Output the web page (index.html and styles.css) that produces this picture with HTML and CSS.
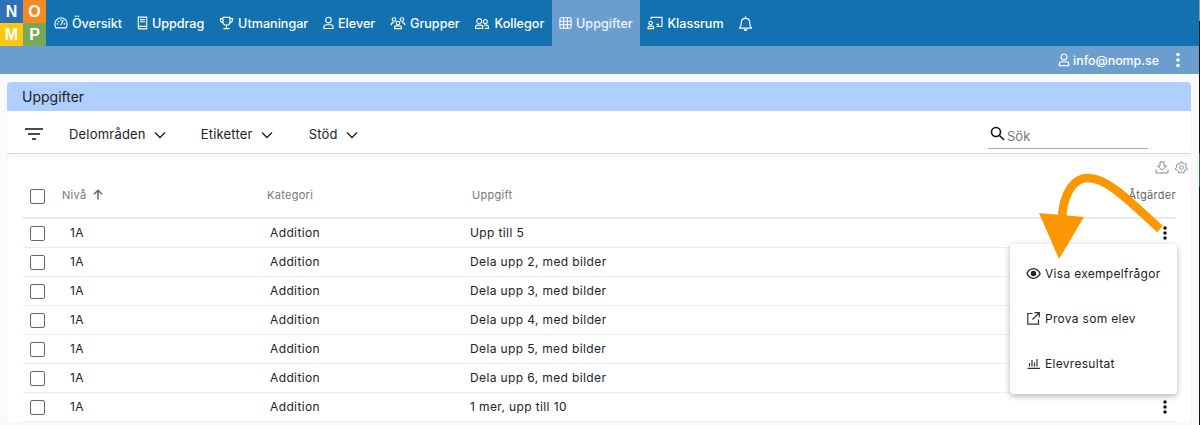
FILE: index.html
```html
<!DOCTYPE html>
<html lang="sv">
<head>
<meta charset="utf-8">
<title>Uppgifter</title>
<link rel="stylesheet" href="styles.css">
</head>
<body>
<header class="topnav">
  <div class="logo"><span class="tile n">N</span><span class="tile o">O</span><span class="tile m">M</span><span class="tile p">P</span></div>
  <nav class="menu">
    <a class="item"><svg class="ic" width="14" height="14" viewBox="0 0 16 16"><path d="M2.2 13.500h11.600c.8-1.300 1.200-2.800 1.200-4.500a7 7 0 0 0-14 0c0 1.700.4 3.200 1.200 4.500z"/><path d="M8 10l2.500-5M3.500 9h1M11.500 9h1M5 6l.7.7M8 4.200v1"/></svg>Översikt</a>
    <a class="item"><svg class="ic" width="11" height="14" viewBox="0 0 13 16"><path d="M1.500 1h10v14h-8.500a1.500 1.500 0 0 1-1.500-1.500zM1.500 12h10M4 4h5M4 6.500h5"/></svg>Uppdrag</a>
    <a class="item"><svg class="ic" width="15" height="14" viewBox="0 0 16 16"><path d="M4 1.500h8v5a4 4 0 0 1-8 0zM4 3h-3c0 3 1 4.500 3.500 5M12 3h3c0 3-1 4.500-3.500 5M8 10.500v3M5 14.500h6"/></svg>Utmaningar</a>
    <a class="item"><svg class="ic" width="11" height="14" viewBox="0 0 13 16"><circle cx="6.500" cy="4.500" r="3.300"/><path d="M1 14.500v-1.500c0-1.800 1.500-3 3-3h5c1.500 0 3 1.200 3 3v1.500z"/></svg>Elever</a>
    <a class="item"><svg class="ic" width="16" height="14" viewBox="0 0 17 16"><circle cx="4" cy="4" r="2"/><circle cx="13" cy="4" r="2"/><circle cx="8.500" cy="8" r="2"/><path d="M.8 10c0-1.500 1-2.500 2.500-2.500M16.200 10c0-1.500-1-2.500-2.500-2.500M4.500 14.500v-1c0-1.300 1-2.200 2.200-2.200h3.600c1.200 0 2.200.9 2.200 2.200v1z"/></svg>Grupper</a>
    <a class="item"><svg class="ic" width="16" height="13" viewBox="0 0 18 16"><circle cx="5.500" cy="5" r="3"/><circle cx="13" cy="5.500" r="2.500"/><path d="M1 14v-1.500c0-1.500 1-2.500 2.500-2.500h4c1.500 0 2.500 1 2.500 2.500v1.500zM12 10h2.500c1.500 0 2.500 1 2.500 2.500v1.500h-4"/></svg>Kollegor</a>
    <a class="item active"><svg class="ic" width="13" height="12" viewBox="0 0 16 15"><rect x="1" y="1" width="14" height="13" rx="1.500"/><path d="M1 5.300h14M1 9.700h14M5.700 1v13M10.300 1v13"/></svg>Uppgifter</a>
    <a class="item"><svg class="ic" width="16" height="14" viewBox="0 0 18 16"><path d="M4.500 3v-1.500h12.500v10.500h-6M13 12v-2.500h-2"/><circle cx="4" cy="8" r="2"/><path d="M1 14.500v-1c0-1.300 1-2 2-2h2c1 0 2.500.7 2.500 2v1z"/></svg>Klassrum</a>
    <a class="item bell"><svg class="ic" width="15" height="17" viewBox="0 0 16 17"><path d="M1.500 13.500c1.500-1.500 2-3 2-5.500 0-3 2-5 4.500-5s4.500 2 4.500 5c0 2.500.5 4 2 5.500z"/><path d="M8 3v-1.500"/><path class="fill" d="M6 14.500h4a2 2 0 0 1-4 0z"/></svg></a>
  </nav>
</header>

<div class="subnav">
  <span class="user"><svg class="ic" width="12" height="14" viewBox="0 0 13 16"><circle cx="6.500" cy="4.500" r="3.300"/><path d="M1 14.500v-1.500c0-1.800 1.500-3 3-3h5c1.500 0 3 1.200 3 3v1.500z"/></svg>info@nomp.se</span>
  <svg class="dots-w" width="4" height="16" viewBox="0 0 4 16"><circle cx="2" cy="2.500" r="1.800"/><circle cx="2" cy="8" r="1.800"/><circle cx="2" cy="13.500" r="1.800"/></svg>
</div>

<main class="page">
  <div class="title">Uppgifter</div>

  <section class="filters">
    <svg class="filter-ic" width="18" height="12" viewBox="0 0 18 12"><path d="M0 1h18M3 6h12M7 11h4"/></svg>
    <button class="dd dd1">Delområden<svg class="chev" width="12" height="8" viewBox="0 0 12 8"><path d="M1 1.500l5 5 5-5"/></svg></button>
    <button class="dd dd2">Etiketter<svg class="chev" width="12" height="8" viewBox="0 0 12 8"><path d="M1 1.500l5 5 5-5"/></svg></button>
    <button class="dd">Stöd<svg class="chev" width="12" height="8" viewBox="0 0 12 8"><path d="M1 1.500l5 5 5-5"/></svg></button>
    <div class="search">
      <svg class="search-ic" width="15" height="15" viewBox="0 0 15 15"><circle cx="6" cy="6" r="4.500"/><path d="M9.500 9.500l4.500 4.500"/></svg>
      <span class="search-ph">Sök</span>
    </div>
  </section>

  <section class="card">
    <div class="tools">
      <svg class="tool" width="14" height="13" viewBox="0 0 14 13"><path d="M5 1h4v4h2.500L7 9 2.500 5H5zM1 8.500v3.500h12V8.500"/></svg>
      <svg class="tool" width="13" height="13" viewBox="0 0 14 14"><circle cx="7" cy="7" r="2"/><path d="M6 1h2l.4 1.700 1.500.7 1.600-.8 1.200 1.600-1.200 1.200.2 1.600 1.500.9-.6 1.900-1.700-.2-1.100 1.200.1 1.700-1.900.5-.9-1.400H6.300l-.9 1.400-1.900-.5.1-1.700-1.100-1.200-1.700.2-.6-1.900 1.500-.9.2-1.600L1.700 4.200l1.200-1.600 1.600.8L6 2.700z"/></svg>
    </div>
    <div class="row head">
      <span class="cb"></span>
      <span class="cell first">Nivå <svg class="up" width="10" height="11" viewBox="0 0 10 11"><path d="M5 10.500V1.500M1 5.200L5 1.200l4 4"/></svg></span>
      <span class="cell">Kategori</span>
      <span class="cell">Uppgift</span>
      <span class="actions-h">Åtgärder</span>
    </div>
    <div class="row"><span class="cb"></span><span class="cell first b">1A</span><span class="cell b">Addition</span><span class="cell b t">Upp till 5</span><span class="more"><svg class="dots" width="4" height="14" viewBox="0 0 4 14"><circle cx="2" cy="2" r="1.700"/><circle cx="2" cy="7" r="1.700"/><circle cx="2" cy="12" r="1.700"/></svg></span></div>
    <div class="row"><span class="cb"></span><span class="cell first b">1A</span><span class="cell b">Addition</span><span class="cell b t">Dela upp 2, med bilder</span></div>
    <div class="row"><span class="cb"></span><span class="cell first b">1A</span><span class="cell b">Addition</span><span class="cell b t">Dela upp 3, med bilder</span></div>
    <div class="row"><span class="cb"></span><span class="cell first b">1A</span><span class="cell b">Addition</span><span class="cell b t">Dela upp 4, med bilder</span></div>
    <div class="row"><span class="cb"></span><span class="cell first b">1A</span><span class="cell b">Addition</span><span class="cell b t">Dela upp 5, med bilder</span></div>
    <div class="row"><span class="cb"></span><span class="cell first b">1A</span><span class="cell b">Addition</span><span class="cell b t">Dela upp 6, med bilder</span></div>
    <div class="row"><span class="cb"></span><span class="cell first b">1A</span><span class="cell b">Addition</span><span class="cell b t">1 mer, upp till 10</span><span class="more"><svg class="dots" width="4" height="14" viewBox="0 0 4 14"><circle cx="2" cy="2" r="1.700"/><circle cx="2" cy="7" r="1.700"/><circle cx="2" cy="12" r="1.700"/></svg></span></div>
  </section>
</main>

<div class="popup">
  <div class="pop-item"><svg class="pic" width="15" height="11" viewBox="0 0 16 12"><path class="solid" fill-rule="evenodd" d="M8 0C4.500 0 1.500 2.300 0 6c1.500 3.700 4.500 6 8 6s6.500-2.300 8-6c-1.500-3.700-4.500-6-8-6zM8 1.400c2.700 0 5 1.800 6.400 4.600-1.400 2.800-3.700 4.600-6.400 4.600S3 8.800 1.600 6C3 3.200 5.300 1.400 8 1.400zM8 3a3 3 0 1 0 0 6 3 3 0 0 0 0-6z"/></svg>Visa exempelfrågor</div>
  <div class="pop-item"><svg class="pic line" width="13" height="13" viewBox="0 0 13 13"><path d="M5.500 1.500H.8v10.700h10.700V7.500M7.500.7h4.800v4.800M12 1L5.500 7.500"/></svg>Prova som elev</div>
  <div class="pop-item"><svg class="pic line" width="13" height="11" viewBox="0 0 13 11"><path d="M.5 10.300h12.500M2.500 5v3.500M5 2v6.500M7.500 4.500v4M10 1v7.500"/></svg>Elevresultat</div>
</div>

<svg class="arrow" width="1200" height="425" viewBox="0 0 1200 425">
  <path class="shaft" d="M1160 229C1130 202 1108 178 1088 178C1073 178 1063 195 1062 218"/>
  <path class="head-a" d="M1039 213L1084 217L1059 259Z"/>
</svg>
<div class="edge"></div>
</body>
</html>
```

FILE: styles.css
```css
* { box-sizing: border-box; }
html, body { margin: 0; height: 425px; overflow: hidden; }
body { background: #fafafa; font-family: Inter, "Liberation Sans", sans-serif; color: #222; position: relative; }

.topnav { height: 46px; background: #1271ae; display: flex; }
.logo { width: 46px; height: 46px; display: grid; grid-template-columns: 23px 23px; grid-template-rows: 23px 23px; }
.tile { display: flex; align-items: center; justify-content: center; color: #fff; font: 700 16px "Liberation Sans", sans-serif; }
.tile.n { background: #2f70b8; }
.tile.o { background: #f58a20; }
.tile.m { background: #fdc80f; }
.tile.p { background: #78a859; }
.menu { display: flex; padding-left: .5px; }
.item { display: flex; align-items: center; gap: 4px; padding: 0 7.400px; color: #fff; font-size: 12.600px; font-weight: 500; }
.item.active { background: #6b9ecf; color: #eef4fb; }
.ic { fill: none; stroke: #fff; stroke-width: 1.300; stroke-linejoin: round; stroke-linecap: round; flex: none; }
.ic .fill { fill: #fff; stroke: none; }

.subnav { height: 28px; background: #6b9ecf; display: flex; align-items: center; justify-content: flex-end; padding-right: 20px; gap: 17px; color: #fff; }
.user { display: flex; align-items: center; gap: 3px; font-size: 12.400px; font-weight: 500; }
.dots-w { fill: #fff; }

.page { padding: 8px 9px 0 7px; }
.title { height: 29px; background: #afd0fe; border-radius: 4px 4px 0 0; padding-left: 15px; font-size: 14px; line-height: 29px; color: #222; }

.filters { height: 42px; background: #fff; display: flex; align-items: center; padding: 4px 43px 0 18px; box-shadow: 0 1px 1px rgba(0,0,0,.12); }
.filter-ic { fill: none; stroke: #111; stroke-width: 1.500; margin-right: 26px; }
.dd { border: 0; background: none; padding: 0; display: flex; align-items: center; gap: 8px; font: 400 13px Inter, sans-serif; color: #222; letter-spacing: .2px; }
.dd1 { margin-right: 35px; }
.dd2 { margin-right: 36px; }
.chev { fill: none; stroke: #222; stroke-width: 1.400; margin-top: 1px; }
.search { margin-left: auto; width: 160px; height: 29px; border-bottom: 1.500px solid #aaa; display: flex; align-items: center; gap: 2px; padding-left: 2px; }
.search-ic { fill: none; stroke: #111; stroke-width: 1.600; }
.search-ph { font-size: 13px; color: #777; margin-top: 4px; }

.card { margin-top: 4px; background: #fff; border-radius: 4px; padding: 0 15px 0 16px; box-shadow: 0 0 2px rgba(0,0,0,.08); }
.tools { height: 19px; display: flex; justify-content: flex-end; align-items: flex-start; padding-top: 4px; gap: 6px; margin-right: -12px; }
.tool { fill: none; stroke: #888; stroke-width: 1; }
.row { height: 29px; display: grid; grid-template-columns: 39px 205px 205px 1fr 24px; align-items: center; border-bottom: 1.500px solid #ececec; position: relative; }
.row.head { height: 43px; border-bottom: 2px solid #e8e8e8; grid-template-columns: 39px 205px 205px 1fr 60px; }
.cb { width: 15px; height: 15px; border: 1.500px solid #666; border-radius: 2px; margin-left: 7px; margin-top: 1px; }
.head .cb { margin-top: 0; }
.cell { font-size: 11px; color: #777; letter-spacing: .3px; }
.head .cell { padding-bottom: 3px; }
.cell.b { font-size: 12px; color: #222; letter-spacing: .38px; padding-left: 3px; margin-top: -2px; }
.cell.first.b { padding-left: 8px; }
.cell.t { padding-left: 0; margin-left: -2px; }
.up { fill: none; stroke: #666; stroke-width: 1.500; margin-left: 3px; vertical-align: -1px; }
.actions-h { font-size: 11px; color: #666; letter-spacing: .3px; text-align: right; padding-bottom: 3px; }
.more { grid-column: 5; display: flex; justify-content: flex-end; padding-right: 9px; }
.dots { fill: #111; }

.popup { position: absolute; left: 1010px; top: 244px; width: 167px; height: 150px; background: #fff; border-radius: 4px; box-shadow: 0 2px 6px rgba(0,0,0,.3); padding-top: 7px; }
.pop-item { height: 45px; display: flex; align-items: center; gap: 4px; padding-left: 16px; font-size: 12px; color: #222; letter-spacing: .3px; }
.pic { flex: none; }
.solid { fill: #222; }
.line { fill: none; stroke: #333; stroke-width: 1.200; margin: 0 1px; }

.arrow { position: absolute; left: 0; top: 0; pointer-events: none; }
.shaft { fill: none; stroke: #fb9700; stroke-width: 8.500; }
.head-a { fill: #fb9700; }

.edge { position: absolute; right: 0; top: 0; width: 1.500px; height: 425px; background: linear-gradient(#999 0 5%, #111 5% 36%, #1a7a1a 36% 44%, #111 44% 100%); }
```
